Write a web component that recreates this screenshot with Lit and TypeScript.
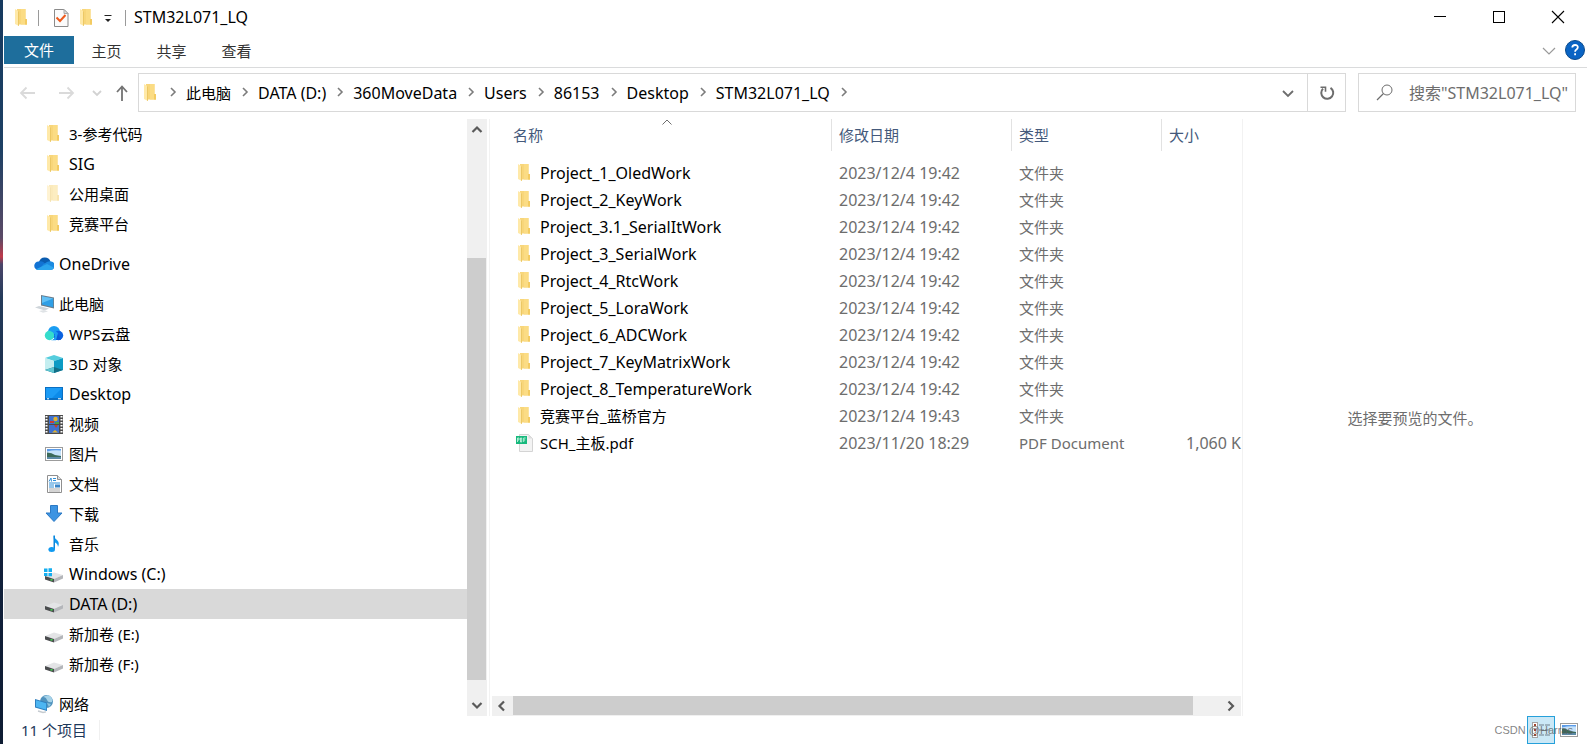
import { LitElement, html, css, svg, nothing } from "lit";
import { customElement, property, state } from "lit/decorators.js";
import { classMap } from "lit/directives/class-map.js";

const drive = svg`
  <polygon points="1,12 10,8.500 19,11 10,15" fill="#e3e4e6"/>
  <polygon points="10,15 19,11 19,14.500 10,18.500" fill="#b4b6ba"/>
  <polygon points="1,12 10,15 10,18.500 1,15.500" fill="#4a4c4e"/>
  <rect x="6.500" y="15" width="2" height="1.600" fill="#3fd24d"/>`;

const folder = svg`
  <path d="M5 1h8.500v10l1.500 1v4.500H5z" fill="#f8d67a"/>
  <path d="M9 1h4.500v10l1.500 1v4.500H9z" fill="#fbdc84"/>
  <path d="M13 11h2v5.500h-2z" fill="#f3cb62"/>
  <path d="M3 1l4 2.500v14.500L3 16z" fill="#ffe9a8"/>
  <path d="M6 3l1 .5v14.500l-1-.5z" fill="#ecc865"/>`;

const picture = svg`
  <rect x="1.500" y="3.500" width="17" height="13" fill="#fff" stroke="#9c9c9c"/>
  <rect x="3" y="5" width="14" height="10" fill="#5b9be8"/>
  <path d="M3 7.500q7-2 14-1V12H3z" fill="#c5e2fa"/>
  <path d="M3 8.500q5 0 8 2.500l6 1v1H3z" fill="#3b6a5a"/>
  <rect x="3" y="13" width="14" height="2" fill="#5c8aa6"/>`;

const ICONS: Record<string, unknown> = {
  folder,
  faded: svg`<g opacity=".5">${folder}</g>`,
  onedrive: svg`
    <path d="M5 8a6 6 0 0 1 11.500-.5L12 12z" fill="#0a5cb0"/>
    <path d="M4.500 16A4.200 4.200 0 0 1 4.500 7.500q3-.8 5.500 1l6 7.500z" fill="#1173d4"/>
    <path d="M9 10.500l4-2.500q2-1 4.200-.5A4.300 4.300 0 0 1 16 16H5z" fill="#1b8ae0"/>
    <path d="M2 15.300L13 10l6.700 3.500q-.8 2.500-3.700 2.500H4.500q-1.500 0-2.500-.7z" fill="#2ba5ee"/>`,
  pc: svg`
    <polygon points="7,1 20,3.500 20,14.500 7,11.500" fill="#6b7d8c"/>
    <polygon points="8,2.200 19.200,4.500 19.200,13.200 8,10.600" fill="#2f9fe6"/>
    <polygon points="8,2.200 19.200,4.500 8,9" fill="#62c0f5"/>
    <polygon points="1,13.500 5,12 15,14.500 11,16.500" fill="#cfd5da"/>
    <polygon points="5,17 10,16 14,17.500 9,18.700" fill="#dfe3e6"/>`,
  wps: svg`
    <circle cx="10" cy="8" r="6" fill="#1a9df2"/>
    <circle cx="14.500" cy="11.500" r="4.700" fill="#0b62e0"/>
    <path d="M9 16l5-6 3 6z" fill="#0a57d6"/>
    <circle cx="5.500" cy="11.500" r="4.700" fill="#35dccb"/>
    <path d="M6 7q5 1 5 5t-4 4.200h5L14 9 9 5z" fill="#1c9cf3"/>`,
  cube: svg`
    <polygon points="1,4 10,1 19,4 10,7" fill="#55cddd"/>
    <polygon points="1,4 10,7 10,19 1,16" fill="#c4eef0"/>
    <polygon points="10,7 19,4 19,16 10,19" fill="#0c9bc4"/>
    <polygon points="1,16 10,13 19,16 10,19" fill="#126f86"/>
    <polygon points="10,13 10,19 1,16" fill="#5fc6d2"/>`,
  desktop: svg`
    <rect x="1" y="3" width="18" height="13" fill="#0a6fc2"/>
    <rect x="2" y="4" width="16" height="10" fill="#1b9bf5"/>
    <polygon points="18,4 18,14 8,14" fill="#0c8bea"/>
    <path d="M3 14.800h2M14 14.800h3" stroke="#fff"/>`,
  video: svg`
    <rect x="1" y="1" width="18" height="19" fill="#4c4c4c"/>
    <path d="M2.500 2v18M17.500 2v18" stroke="#fff" stroke-width="2" stroke-dasharray="1.500 1.500"/>
    <rect x="5" y="2" width="10" height="8" fill="#3f72cf"/>
    <rect x="5" y="11" width="10" height="8" fill="#3f72cf"/>
    <circle cx="11.500" cy="5" r="2.200" fill="#e5b32b"/>
    <path d="M6 9h4V7H6zM10 11h4l-2 3z" fill="#c9402c"/>
    <path d="M11 8h4v2h-4z" fill="#4aa04a"/>
    <path d="M8 18.500l3-2.500 3 2.500z" fill="#e5b32b"/>`,
  picture,
  doc: svg`
    <path d="M3.500 1.500h10l4 4v13h-14z" fill="#fff" stroke="#8f8f8f"/>
    <path d="M13.500 1.500v4h4" fill="#ddd" stroke="#8f8f8f"/>
    <path d="M5 7.500l2-3.500.500 3.500M9 4.500h3M9 6.500h3M5 9h11M5 11h5M5 13h5" stroke="#2f8fd8" fill="none"/>
    <rect x="11" y="10.500" width="5" height="3" fill="#3c86c8"/>
    <path d="M5 15h11M5 17h11" stroke="#a9a9a9"/>`,
  download: svg`
    <path d="M6.500 1.500h7V9H18l-8 8.500L2 9h4.500z" fill="#3d94e2" stroke="#2b79c4"/>`,
  music: svg`
    <path d="M9.500 1.500q1 3 3.500 4.500 3 2.500 1 7-.2-3.500-3-4.500v7" fill="#109af0"/>
    <path d="M9.500 1.500h1.500v14H9.500z" fill="#0a86dc"/>
    <ellipse cx="7.700" cy="15.500" rx="3.300" ry="2.500" fill="#109af0"/>`,
  windrive: svg`
    ${drive}
    <path d="M0 4.500h3.500V8H0zM4.500 4.300h3.500V8H4.500zM0 9h3.500v3H0zM4.500 9h3.500v3.200H4.500z" fill="#14aef0"/>`,
  drive,
  network: svg`
    <circle cx="12.500" cy="7.500" r="6.500" fill="#4f92bd"/>
    <path d="M9 3q3 0 4 3t5 2q1-3-1.500-5.500T9 3z" fill="#a5d2e8"/>
    <path d="M13 9l4 1-2 3z" fill="#8cc4df"/>
    <polygon points="1,5 13,8.500 13,17 1,13.500" fill="#2f7fbe"/>
    <polygon points="2,6.300 12.200,9.200 12.200,15.800 2,12.800" fill="#4db6f2"/>
    <path d="M4 17l5 1.500 3-.6" stroke="#c5cbd0" stroke-width="1.400" fill="none"/>`,
  pdf: svg`
    <path d="M4.500 1.500h9l4 4v13h-13z" fill="#f3f3f3" stroke="#d4d4d4"/>
    <path d="M13.500 1.500v4h4z" fill="#dedede"/>
    <rect x="1" y="3" width="11" height="8" fill="#17b97d"/>
    <path d="M2.500 9V5h1.500v2H3M5.500 5v4h1.200V5zM8.700 9V5h2M8.700 7h1.500" stroke="#d9f7ea" stroke-width=".8" fill="none"/>`,
  check: svg`
    <path d="M3.500 1.500h9.500l4 4v13H3.500z" fill="#fbfbfb" stroke="#8a8a8a"/>
    <path d="M13 1.500v4h4z" fill="#ddd" stroke="#a9a9a9"/>
    <path d="M5.500 9.500l3.500 3.500 5.500-6" stroke="#ee5a1c" stroke-width="2" fill="none"/>`,
  qatmenu: svg`<path d="M6.500 7.500h7" stroke="#222" fill="none"/><path d="M7 11h6l-3 3z" fill="#222"/>`,
  details: svg`
    <rect x="1.500" y="2.500" width="5" height="15" fill="#fff" stroke="#a4a4a4"/>
    <path d="M3 5h2M3 10h2M3 15h2" stroke="#a0452f" stroke-width="2"/>
    <path d="M8 5h5M14 5h5M8 10h5M14 10h5M8 15h5M14 15h5" stroke="#6f7f8a"/>`,
  min: svg`<path d="M4 8.500h12" stroke="#000"/>`,
  max: svg`<rect x="4.500" y="3.500" width="11" height="11" fill="none" stroke="#000"/>`,
  close: svg`<path d="M4 3l12 12M16 3L4 15" stroke="#000" stroke-width="1.100"/>`,
  expand: svg`<path d="M4 8l6 6 6-6" stroke="#9a9a9a" stroke-width="1.200" fill="none"/>`,
  help: svg`
    <circle cx="10" cy="10" r="9.500" fill="#0a64c4" stroke="#0b4a8c"/>
    <path d="M7.300 7.600q0-2.600 2.800-2.600t2.700 2.300q0 1.300-1.300 2.200-1.400.8-1.400 2.200M10.100 13.300v2" stroke="#fff" stroke-width="1.800" fill="none"/>`,
  back: svg`<path d="M17 10H3M8.500 4.500L3 10l5.500 5.500" stroke="#dadada" stroke-width="1.800" fill="none"/>`,
  forward: svg`<path d="M2 10h14M10.500 4.500L16 10l-5.500 5.500" stroke="#dadada" stroke-width="1.800" fill="none"/>`,
  recent: svg`<path d="M6 8l4 4 4-4" stroke="#d2d2d2" stroke-width="1.800" fill="none"/>`,
  up: svg`<path d="M10 18V4M5 9l5-5.500L15 9" stroke="#737373" stroke-width="1.800" fill="none"/>`,
  crumb: svg`<path d="M8 5L12 9 8 13" stroke="#7c7c7c" stroke-width="1.600" fill="none"/>`,
  drop: svg`<path d="M5 8l5 5 5-5" stroke="#6d6d6d" stroke-width="1.800" fill="none"/>`,
  refresh: svg`
    <path d="M13.500 4.800a6 6 0 1 1-7.500.8" stroke="#6d6d6d" stroke-width="2" fill="none"/>
    <path d="M3.500 4.200h5v4.600" stroke="#6d6d6d" stroke-width="1.600" fill="none"/>`,
  search: svg`
    <circle cx="12" cy="7" r="5" fill="none" stroke="#6d6d6d"/>
    <path d="M8.500 10.500L2 17" stroke="#6d6d6d" stroke-width="1.200"/>`,
  sUp: svg`<path d="M5.500 13L10 8.500l4.500 4.500" stroke="#5a5a5a" stroke-width="2.200" fill="none"/>`,
  sDown: svg`<path d="M5.500 7L10 11.500 14.500 7" stroke="#5a5a5a" stroke-width="2.200" fill="none"/>`,
  sLeft: svg`<path d="M12 5.500L7.500 10l4.500 4.500" stroke="#5a5a5a" stroke-width="2.200" fill="none"/>`,
  sRight: svg`<path d="M7.500 5.500L12 10l-4.500 4.500" stroke="#5a5a5a" stroke-width="2.200" fill="none"/>`,
  sort: svg`<path d="M5.500 12.500L10 8l4.500 4.500" stroke="#6d6d6d" fill="none"/>`,
};

@customElement("x-icon")
class XIcon extends LitElement {
  static styles = css`
    :host { display: block; flex: none; width: 20px; height: 20px; }
    svg { display: block; }
  `;
  @property() name = "folder";
  render() {
    return html`<svg width="20" height="20" viewBox="0 0 20 20" aria-hidden="true">${ICONS[this.name]}</svg>`;
  }
}

interface Node { label: string; icon: string; root?: boolean; }
const TREE: Node[][] = [
  [
    { label: "3-参考代码", icon: "folder" },
    { label: "SIG", icon: "folder" },
    { label: "公用桌面", icon: "faded" },
    { label: "竞赛平台", icon: "folder" },
  ],
  [{ label: "OneDrive", icon: "onedrive", root: true }],
  [
    { label: "此电脑", icon: "pc", root: true },
    { label: "WPS云盘", icon: "wps" },
    { label: "3D 对象", icon: "cube" },
    { label: "Desktop", icon: "desktop" },
    { label: "视频", icon: "video" },
    { label: "图片", icon: "picture" },
    { label: "文档", icon: "doc" },
    { label: "下载", icon: "download" },
    { label: "音乐", icon: "music" },
    { label: "Windows (C:)", icon: "windrive" },
    { label: "DATA (D:)", icon: "drive" },
    { label: "新加卷 (E:)", icon: "drive" },
    { label: "新加卷 (F:)", icon: "drive" },
  ],
  [{ label: "网络", icon: "network", root: true }],
];

const CRUMBS = ["此电脑", "DATA (D:)", "360MoveData", "Users", "86153", "Desktop", "STM32L071_LQ"];

const dir = (name: string, time = "19:42") => ({
  name, date: `2023/12/4 ${time}`, type: "文件夹", size: "", icon: "folder",
});
const FILES = [
  dir("Project_1_OledWork"),
  dir("Project_2_KeyWork"),
  dir("Project_3.1_SerialItWork"),
  dir("Project_3_SerialWork"),
  dir("Project_4_RtcWork"),
  dir("Project_5_LoraWork"),
  dir("Project_6_ADCWork"),
  dir("Project_7_KeyMatrixWork"),
  dir("Project_8_TemperatureWork"),
  dir("竞赛平台_蓝桥官方", "19:43"),
  { name: "SCH_主板.pdf", date: "2023/11/20 18:29", type: "PDF Document", size: "1,060 K", icon: "pdf" },
];

// Latin-only labels are set one size up so they balance with the Chinese ones.
const sized = (s: string) => html`<span class=${classMap({ latin: /^[\x20-\x7e]+$/.test(s) })}>${s}</span>`;

@customElement("app-root")
class AppRoot extends LitElement {
  @state() selected = "DATA (D:)";

  static styles = css`
    :host {
      display: flex;
      height: 100vh;
      overflow: hidden;
      background: #fff;
      color: #000;
      font: 15px/20px "Noto Sans", "Noto Sans CJK SC", sans-serif;
    }
    * { box-sizing: border-box; }
    button {
      display: flex; align-items: center; justify-content: center;
      margin: 0; padding: 0; border: 0; background: none;
      font: inherit; color: inherit; white-space: nowrap;
    }
    a { color: inherit; text-decoration: none; }
    .latin { font-size: 16px; }
    .wallpaper {
      flex: none; width: 3px;
      background: linear-gradient(#163a5f, #1d4064 20%, #5b4a66 32%, #c0394a 34.500%, #4c466a 35.500%, #243b5a 40%, #13233f 65%, #0e1c33);
    }
    .window { flex: 1; min-width: 0; display: flex; flex-direction: column; padding-left: 1px; }
    .grow { flex: 1; min-width: 0; }

    .titlebar { flex: none; display: flex; align-items: center; height: 36px; padding-left: 8px; }
    .rule { width: 1px; height: 16px; background: #9a9a9a; margin: 0 8px 0 9px; }
    .first { margin: 0 9px 0 6px; }
    .tool { width: 26px; height: 26px; }
    .menu { width: 16px; }
    .title { margin: 0; padding-bottom: 2px; font-size: 16px; font-weight: 400; }
    .caption { width: 59px; height: 36px; }

    .tabs { flex: none; display: flex; align-items: center; height: 32px; padding-bottom: 3px; border-bottom: 1px solid #dadbdc; }
    .tab { width: 65px; height: 28px; padding-top: 1px; color: #333; }
    .file { width: 70px; padding-top: 0; background: #1e6e9c; color: #fff; }
    .ribbon { display: flex; gap: 6px; padding-right: 2px; }

    .navbar { flex: none; display: flex; align-items: center; height: 51px; padding: 0 11px 2px 14px; }
    .history { display: flex; align-items: center; margin-right: 6px; }
    .arrow { width: 39px; height: 30px; justify-content: flex-start; }
    .fwd { width: 30px; }
    .narrow { width: 25px; }
    .address { flex: 1; min-width: 0; display: flex; align-items: center; height: 39px; border: 1px solid #d9d9d9; margin-right: 12px; padding-left: 2px; }
    .crumbs { display: flex; align-items: center; margin: 0; padding: 0; list-style: none; min-width: 0; overflow: hidden; white-space: nowrap; }
    .crumbs li { display: flex; align-items: center; }
    .sep { width: 27px; padding-left: 4px; }
    .lead { width: 25px; padding-left: 2px; }
    .addrbtn { width: 38px; height: 37px; }
    .refresh { border-left: 1px solid #d9d9d9; }
    .search { flex: none; display: flex; align-items: center; width: 218px; height: 39px; border: 1px solid #d9d9d9; padding-left: 16px; gap: 14px; }
    .search input { flex: 1; min-width: 0; border: 0; outline: 0; padding: 0; background: none; font: inherit; font-size: 16px; color: #000; }
    .search input::placeholder { color: #6d6d6d; opacity: 1; }

    .body { flex: 1; min-height: 0; display: flex; }
    .side { flex: none; width: 483px; display: flex; }
    .tree { flex: 1; min-width: 0; overflow: hidden; display: flex; flex-direction: column; gap: 10px; }
    .group { margin: 0; padding: 0; list-style: none; flex: none; }
    .node { display: flex; align-items: center; gap: 5px; height: 30px; padding-left: 40px; }
    .root { padding-left: 30px; }
    .current { background: #d9d9d9; }

    .vbar { flex: none; width: 20px; display: flex; flex-direction: column; background: #f0f0f0; }
    .hbar { flex: none; height: 20px; display: flex; background: #f0f0f0; margin: 0 1px 0 2px; }
    .scroll { flex: none; width: 20px; height: 20px; }
    .vtrack { flex: 1; display: flex; flex-direction: column; justify-content: flex-end; padding: 0 1px 16px 0; }
    .vthumb { height: 78%; background: #cdcdcd; }
    .htrack { flex: 1; display: flex; padding: 0 0 1px 1px; }
    .hthumb { width: 96%; background: #cdcdcd; }

    .main { flex: 1; min-width: 0; display: flex; flex-direction: column; margin-left: 2px; border-left: 1px solid #f2f2f2; border-right: 1px solid #f2f2f2; }
    .list { flex: 1; min-height: 0; overflow: hidden; }
    table { width: 100%; table-layout: fixed; border-collapse: separate; border-spacing: 0; }
    .c-name { width: 342px; }
    .c-date { width: 180px; }
    .c-type { width: 150px; }
    th { position: relative; height: 32px; padding: 0 0 0 7px; border-right: 1px solid #e2e2e2; font-weight: 400; text-align: left; color: #44597b; }
    th:first-child { padding-left: 23px; }
    th:last-child { border-right: 0; }
    .sort { position: absolute; top: -7px; left: 49%; }
    .gap td { height: 8px; padding: 0; }
    td { height: 27px; padding: 0 0 0 7px; color: #6d6d6d; white-space: nowrap; }
    td:first-child { padding-left: 25px; color: #000; }
    .name { display: flex; align-items: center; gap: 5px; }
    .size { text-align: right; padding-right: 1px; }
    .preview { flex: none; width: 344px; display: flex; align-items: center; justify-content: center; color: #6d6d6d; }

    .status { flex: none; display: flex; align-items: center; height: 28px; padding-left: 17px; color: #1e395b; }
    .count { padding-right: 12px; border-right: 1px solid #f0f0f0; }
    .views { display: flex; position: relative; padding-right: 4px; }
    .view { width: 28px; height: 28px; }
    .active { background: #cbe8f6; border: 1px solid #26a0da; }
    .mark { position: absolute; right: 14px; top: 4px; font: 11px/20px "Liberation Sans", sans-serif; color: rgba(90, 90, 90, .75); white-space: nowrap; }
  `;

  private node(n: Node) {
    const cls = { node: true, root: !!n.root, current: n.label === this.selected };
    return html`<li>
      <a class=${classMap(cls)} href="#" @click=${(e: Event) => { e.preventDefault(); this.selected = n.label; }}>
        <x-icon name=${n.icon}></x-icon>${sized(n.label)}
      </a>
    </li>`;
  }

  render() {
    return html`
      <div class="wallpaper"></div>
      <div class="window">
        <header class="titlebar">
          <x-icon name="folder"></x-icon>
          <span class="rule first"></span>
          <button class="tool" aria-label="属性"><x-icon name="check"></x-icon></button>
          <button class="tool" aria-label="新建文件夹"><x-icon name="folder"></x-icon></button>
          <button class="tool menu" aria-label="自定义快速访问工具栏"><x-icon name="qatmenu"></x-icon></button>
          <span class="rule"></span>
          <h1 class="title">STM32L071_LQ</h1>
          <div class="grow"></div>
          <button class="caption" aria-label="最小化"><x-icon name="min"></x-icon></button>
          <button class="caption" aria-label="最大化"><x-icon name="max"></x-icon></button>
          <button class="caption" aria-label="关闭"><x-icon name="close"></x-icon></button>
        </header>

        <nav class="tabs">
          <button class="tab file">文件</button>
          <button class="tab">主页</button>
          <button class="tab">共享</button>
          <button class="tab">查看</button>
          <div class="grow"></div>
          <div class="ribbon">
            <button aria-label="展开功能区"><x-icon name="expand"></x-icon></button>
            <button aria-label="帮助"><x-icon name="help"></x-icon></button>
          </div>
        </nav>

        <div class="navbar">
          <div class="history">
            <button class="arrow" aria-label="后退"><x-icon name="back"></x-icon></button>
            <button class="arrow fwd" aria-label="前进"><x-icon name="forward"></x-icon></button>
            <button class="arrow narrow" aria-label="最近浏览的位置"><x-icon name="recent"></x-icon></button>
            <button aria-label="上移"><x-icon name="up"></x-icon></button>
          </div>
          <div class="address">
            <x-icon name="folder"></x-icon>
            <ol class="crumbs">
              <li><x-icon class="sep lead" name="crumb"></x-icon></li>
              ${CRUMBS.map((c) => html`<li><a href="#">${sized(c)}</a><x-icon class="sep" name="crumb"></x-icon></li>`)}
            </ol>
            <div class="grow"></div>
            <button class="addrbtn" aria-label="以前的位置"><x-icon name="drop"></x-icon></button>
            <button class="addrbtn refresh" aria-label="刷新"><x-icon name="refresh"></x-icon></button>
          </div>
          <label class="search">
            <x-icon name="search"></x-icon>
            <input type="text" aria-label="搜索" placeholder='搜索"STM32L071_LQ"'>
          </label>
        </div>

        <div class="body">
          <aside class="side">
            <nav class="tree">
              ${TREE.map((g) => html`<ul class="group">${g.map((n) => this.node(n))}</ul>`)}
            </nav>
            <div class="vbar">
              <button class="scroll" aria-label="向上滚动"><x-icon name="sUp"></x-icon></button>
              <div class="vtrack"><div class="vthumb"></div></div>
              <button class="scroll" aria-label="向下滚动"><x-icon name="sDown"></x-icon></button>
            </div>
          </aside>

          <main class="main">
            <div class="list">
              <table>
                <colgroup>
                  <col class="c-name"><col class="c-date"><col class="c-type"><col>
                </colgroup>
                <thead>
                  <tr>
                    <th>名称<x-icon class="sort" name="sort"></x-icon></th>
                    <th>修改日期</th><th>类型</th><th>大小</th>
                  </tr>
                </thead>
                <tbody>
                  <tr class="gap"><td colspan="4"></td></tr>
                  ${FILES.map((f) => html`<tr>
                    <td><span class="name"><x-icon name=${f.icon}></x-icon>${sized(f.name)}</span></td>
                    <td>${sized(f.date)}</td>
                    <td>${f.type}</td>
                    <td class="size">${f.size ? sized(f.size) : nothing}</td>
                  </tr>`)}
                </tbody>
              </table>
            </div>
            <div class="hbar">
              <button class="scroll" aria-label="向左滚动"><x-icon name="sLeft"></x-icon></button>
              <div class="htrack"><div class="hthumb"></div></div>
              <button class="scroll" aria-label="向右滚动"><x-icon name="sRight"></x-icon></button>
            </div>
          </main>

          <section class="preview">选择要预览的文件。</section>
        </div>

        <footer class="status">
          <span class="count">11 个项目</span>
          <div class="grow"></div>
          <div class="views">
            <button class="view active" aria-label="详细信息"><x-icon name="details"></x-icon></button>
            <button class="view" aria-label="大缩略图"><x-icon name="picture"></x-icon></button>
            <span class="mark">CSDN @Harras</span>
          </div>
        </footer>
      </div>
    `;
  }
}
